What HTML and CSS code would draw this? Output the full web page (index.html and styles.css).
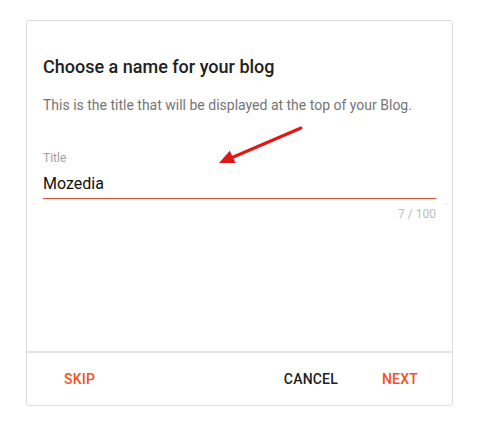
FILE: index.html
```html
<!DOCTYPE html>
<html>
<head>
<meta charset="utf-8">
<link rel="stylesheet" href="styles.css">
</head>
<body>
<div class="card">
  <div class="content">
    <h2 class="heading">Choose a name for your blog</h2>
    <p class="desc">This is the title that will be displayed at the top of your Blog.</p>
    <div class="field">
      <div class="label">Title</div>
      <div class="input">Mozedia</div>
      <div class="counter">7 / 100</div>
    </div>
  </div>
  <div class="actions">
    <button class="btn accent">Skip</button>
    <span class="spacer"></span>
    <button class="btn dark">Cancel</button>
    <button class="btn accent">Next</button>
  </div>
  <svg class="arrow" width="484" height="426" viewBox="0 0 484 426">
    <line x1="301" y1="128" x2="231" y2="158" stroke="#e11717" stroke-width="3" stroke-linecap="round"/>
    <polygon points="219,163 235.5,163 229.8,150.8" fill="#e11717"/>
  </svg>
</div>
</body>
</html>
```

FILE: styles.css
```css
* { box-sizing: border-box; }
html, body { margin: 0; padding: 0; background: #fff; }
body {
  font-family: Roboto, "Liberation Sans", Arial, sans-serif;
  width: 484px;
  height: 426px;
  padding: 20px 0 0 26px;
}
.card {
  width: 427px;
  height: 386px;
  border: 1px solid #dcdcdc;
  border-radius: 3px;
  display: flex;
  flex-direction: column;
  background: #fff;
}
.content {
  flex: 1;
  padding: 34px 16px 0 16px;
}
.heading {
  margin: 0;
  font-size: 18px;
  line-height: 24px;
  font-weight: 500;
  color: #212121;
}
.desc {
  margin: 16px 0 0 0;
  font-size: 14px;
  line-height: 20px;
  color: #757575;
}
.field {
  margin-top: 35px;
}
.label {
  font-size: 12px;
  line-height: 16px;
  color: #9e9e9e;
}
.input {
  margin-top: 8px;
  font-size: 16px;
  line-height: 20px;
  color: #111;
  padding-bottom: 4px;
  border-bottom: 1px solid #e0532a;
}
.counter {
  margin-top: 7px;
  text-align: right;
  font-size: 12px;
  line-height: 16px;
  color: #bdbdbd;
}
.actions {
  border-top: 2px solid #e4e4e4;
  padding: 8px 18px 8px 21px;
  display: flex;
  align-items: center;
  gap: 12px;
}
.spacer { flex: 1; }
.btn {
  font-family: Roboto, "Liberation Sans", Arial, sans-serif;
  background: none;
  border: none;
  padding: 0 16px;
  height: 36px;
  line-height: 36px;
  font-size: 14px;
  font-weight: 500;
  letter-spacing: 0.2px;
  text-transform: uppercase;
  cursor: pointer;
}
.accent { color: #f4511e; }
.dark { color: #212121; }
.arrow {
  position: absolute;
  left: 0;
  top: 0;
  pointer-events: none;
}
```
